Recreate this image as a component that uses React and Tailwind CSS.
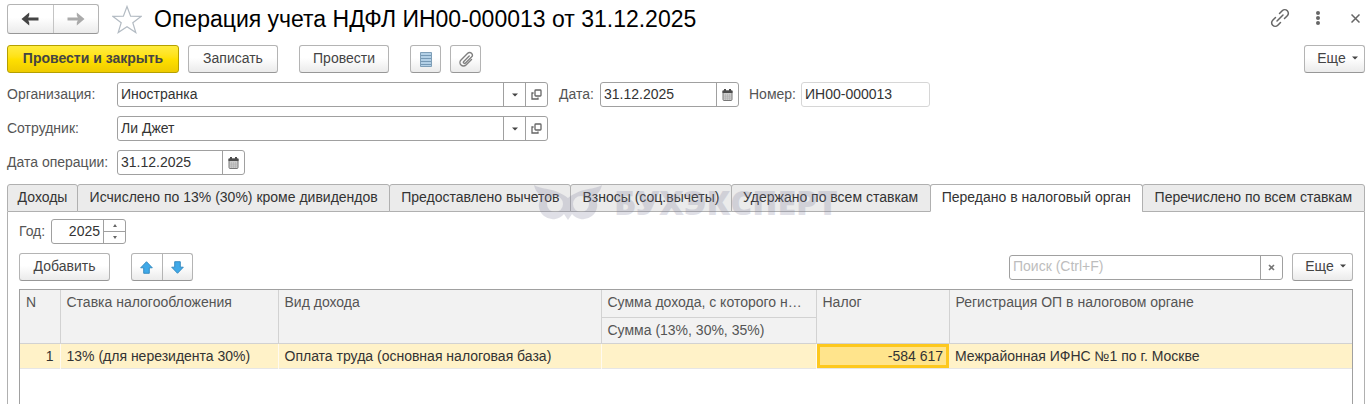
import { useState } from 'react';

const tabs = [
  'Доходы',
  'Исчислено по 13% (30%) кроме дивидендов',
  'Предоставлено вычетов',
  'Взносы (соц.вычеты)',
  'Удержано по всем ставкам',
  'Передано в налоговый орган',
  'Перечислено по всем ставкам',
];

const buttonClass =
  'flex h-7 shrink-0 items-center justify-center rounded-[3px] border border-[#b4b4b4] border-b-[#979797] bg-linear-to-b from-white from-45% to-[#ebebeb] text-[#444]';
const fieldClass = 'flex h-[25px] rounded-[3px] border border-[#a0a0a0] bg-white text-[#333]';
const inputClass = 'min-w-0 flex-1 bg-transparent px-[3px] pb-0.5 outline-none';
const sideClass = 'flex w-[22px] shrink-0 items-center justify-center border-l border-[#a0a0a0]';

const Caret = () => (
  <svg width="6" height="4" viewBox="0 0 6 4" fill="#444">
    <path d="M0 0.5h6L3 3.5z" />
  </svg>
);

const OpenIcon = () => (
  <svg width="11" height="11" viewBox="0 0 11 11" fill="none" stroke="#666" strokeWidth="1.3">
    <rect x="4" y="1" width="6" height="6" rx="0.8" />
    <path d="M2.6 4H1v6h6V8.4" />
  </svg>
);

const CalendarIcon = () => (
  <svg width="11" height="12" viewBox="0 0 11 12">
    <path d="M1 2h9v8.5a1 1 0 0 1-1 1H2a1 1 0 0 1-1-1z" fill="#ccc" stroke="#777" />
    <path d="M0.5 1.5h10V4h-10zM2 0h2v2H2zM7 0h2v2H7z" fill="#4c4c4c" />
    <path d="M3.5 5v6M5.5 5v6M7.5 5v6M1 7.2h9M1 9.2h9" stroke="#aaa" strokeWidth="0.5" />
  </svg>
);

const BackArrow = ({ className }) => (
  <svg className={className} width="18" height="14" viewBox="0 0 18 14" fill="currentColor">
    <path d="M0.5 7L8.2 0.6V3.4L7.2 5.5H17.5V8.5H7.2L8.2 10.6V13.4z" />
  </svg>
);

const BlueArrow = ({ className }) => (
  <svg className={className} width="13" height="13" viewBox="0 0 13 13">
    <path d="M6.5 0.7L12.3 6.8H9.3v5.5H3.7V6.8H0.7z" fill="#3fa9e8" stroke="#2e86bd" strokeWidth="0.9" strokeLinejoin="round" />
  </svg>
);

const SelectField = ({ id, value }) => (
  <div className={`${fieldClass} w-[431px]`}>
    <input id={id} defaultValue={value} className={inputClass} />
    <button aria-label="Выбрать" className={sideClass}><Caret /></button>
    <button aria-label="Открыть" className={sideClass}><OpenIcon /></button>
  </div>
);

const DateField = ({ id, className }) => (
  <div className={`${fieldClass} ${className}`}>
    <input id={id} defaultValue="31.12.2025" className={inputClass} />
    <button aria-label="Календарь" className={sideClass}><CalendarIcon /></button>
  </div>
);

const MoreButton = () => (
  <button className={`${buttonClass} w-[61px] gap-1.5 pb-0.5 pl-1.5`}>
    Еще <Caret />
  </button>
);

const Watermark = () => (
  <div className="pointer-events-none absolute top-0 left-[527px] flex items-center gap-3 text-[#8484a0] opacity-25">
    <svg width="68" height="35" viewBox="0 0 68 35">
      <path
        fill="currentColor"
        fillRule="evenodd"
        d="M0 0C7 5 20 2 34 13C48 2 61 5 68 0C67 5 64 9 60 11A13 13 0 0 1 38 29L34 35L30 29A13 13 0 0 1 8 11C4 9 1 5 0 0ZM21 11a8 8 0 1 0 0 16a8 8 0 1 0 0-16ZM47 11a8 8 0 1 0 0 16a8 8 0 1 0 0-16Z"
      />
    </svg>
    <span className="font-['Open_Sans',sans-serif] text-[34px] leading-9 font-extrabold">БУХЭКСПЕРТ</span>
  </div>
);

const App = () => {
  const [activeTab, setActiveTab] = useState(5);

  return (
    <div className="flex min-h-screen flex-col bg-white pt-1 pr-[3px] pl-[7px] font-['Liberation_Sans',Arial,sans-serif] text-[14px] leading-5 text-[#555]">
      {/* Title */}
      <header className="flex h-[30px] items-center">
        <div className="flex h-[30px] w-[92px] shrink-0 rounded-[3px] border border-[#b4b4b4] border-b-[#979797] bg-linear-to-b from-white from-45% to-[#ebebeb]">
          <button aria-label="Назад" className="flex flex-1 items-center justify-center border-r border-[#c4c4c4] text-[#444]">
            <BackArrow />
          </button>
          <button aria-label="Вперед" className="flex flex-1 items-center justify-center text-[#aaa]">
            <BackArrow className="rotate-180" />
          </button>
        </div>
        <button aria-label="В избранное" className="ml-[13px]">
          <svg width="30" height="29" viewBox="0 0 30 29" fill="none" stroke="#b3bbc3" strokeWidth="1.2">
            <path d="M15 1.5l3.6 9.6 10.4.3-8.2 6.3 3 9.8L15 21.8l-8.8 5.7 3-9.8L1 11.4l10.4-.3z" />
          </svg>
        </button>
        <h1 className="ml-3 text-[23px] leading-[30px] whitespace-nowrap text-black">
          Операция учета НДФЛ ИН00-000013 от 31.12.2025
        </h1>
        <div className="mr-[5px] mb-0.5 ml-auto flex items-center text-[#666]">
          <button aria-label="Ссылка">
            <svg width="20" height="20" viewBox="0 0 20 20" fill="none" stroke="currentColor" strokeWidth="1.5" strokeLinecap="round">
              <path d="M7 13l6-6" />
              <path d="M9.5 5.5l2.7-2.8a3.6 3.6 0 0 1 5.1 5.1l-2.8 2.7" />
              <path d="M10.5 14.5l-2.7 2.8a3.6 3.6 0 0 1-5.1-5.1l2.8-2.7" />
            </svg>
          </button>
          <button aria-label="Меню" className="ml-[25px]">
            <svg width="6" height="16" viewBox="0 0 6 16" fill="currentColor">
              <circle cx="3" cy="3" r="2" />
              <circle cx="3" cy="8" r="2" />
              <circle cx="3" cy="13" r="2" />
            </svg>
          </button>
          <button aria-label="Закрыть" className="ml-[30px]">
            <svg width="9" height="9" viewBox="0 0 9 9" stroke="currentColor" strokeWidth="1.5">
              <path d="M0.5 0.5l8 8M8.5 0.5l-8 8" />
            </svg>
          </button>
        </div>
      </header>

      {/* Commands */}
      <div className="mt-[11px] flex">
        <button className="h-7 w-[172px] rounded-[3px] border border-[#b5a000] bg-linear-to-b from-[#ffec3d] via-[#ffe000] to-[#efcb00] pb-0.5 font-bold text-[#444]">
          Провести и закрыть
        </button>
        <button className={`${buttonClass} ml-[9px] w-[90px] pb-0.5`}>Записать</button>
        <button className={`${buttonClass} ml-[21px] w-[90px] pb-0.5`}>Провести</button>
        <button aria-label="Список" className={`${buttonClass} ml-[21px] w-[31px]`}>
          <svg width="12" height="15" viewBox="0 0 12 15">
            <path d="M0.5 0.5h11v14H0.5z" fill="#b3d0e6" stroke="#7f9fb8" />
            <path d="M1 3.5h10M1 6.5h10M1 9.5h10M1 12.5h10" stroke="#7699b5" />
          </svg>
        </button>
        <button aria-label="Файлы" className={`${buttonClass} ml-[9px] w-[31px]`}>
          <svg width="16" height="16" viewBox="0 0 16 16" fill="none" stroke="#808080" strokeWidth="1.4" strokeLinecap="round">
            <path d="M11.2 5L5.8 10.4a1.2 1.2 0 0 0 1.7 1.7l6-6a2.6 2.6 0 0 0-3.8-3.8L3 9a3.5 3.5 0 0 0 5 5l5.5-5.5" />
          </svg>
        </button>
        <div className="ml-auto"><MoreButton /></div>
      </div>

      {/* Document fields */}
      <div className="mt-[9px] grid grid-cols-[110px_1fr] items-center gap-y-[9px] [&_label]:pb-0.5">
        <label htmlFor="organization">Организация:</label>
        <div className="flex items-center">
          <SelectField id="organization" value="Иностранка" />
          <label htmlFor="date" className="ml-[11px] w-[41px]">Дата:</label>
          <DateField id="date" className="w-[139px]" />
          <label htmlFor="number" className="ml-[10px] w-[52px]">Номер:</label>
          <input
            id="number"
            readOnly
            value="ИН00-000013"
            className="h-[25px] w-[129px] rounded-[3px] border border-[#d6d6d6] px-[3px] pb-0.5 text-[#333] outline-none"
          />
        </div>
        <label htmlFor="employee">Сотрудник:</label>
        <SelectField id="employee" value="Ли Джет" />
        <label htmlFor="operation-date" className="whitespace-nowrap">Дата операции:</label>
        <DateField id="operation-date" className="w-[128px]" />
      </div>

      {/* Tabs */}
      <div className="relative mt-[9px]">
        <div role="tablist" className="grid grid-cols-[70fr_312fr_181fr_160fr_199fr_212fr_223fr]">
          {tabs.map((tab, index) => (
            <button
              key={tab}
              role="tab"
              aria-selected={activeTab === index}
              onClick={() => setActiveTab(index)}
              className={`-mr-px h-7 rounded-t-[3px] border border-[#b0b0b0] pb-0.5 whitespace-nowrap text-[#333] last:mr-0 ${activeTab === index ? 'border-b-white bg-white' : 'bg-[#ebebeb]'}`}
            >
              {tab}
            </button>
          ))}
        </div>
        <Watermark />
      </div>

      <main className="flex flex-1 flex-col border-x border-[#b0b0b0] px-[11px] pt-[7px]">
        <div className="flex items-center">
          <label htmlFor="year" className="w-8 pb-0.5">Год:</label>
          <div className={`${fieldClass} w-[75px]`}>
            <input id="year" defaultValue="2025" className={`${inputClass} text-right`} />
            <div className="flex w-[22px] flex-col border-l border-[#a0a0a0]">
              <button aria-label="Больше" className="flex flex-1 items-center justify-center border-b border-[#a0a0a0]">
                <svg width="4" height="3" viewBox="0 0 4 3" fill="#666"><path d="M0 3h4L2 0z" /></svg>
              </button>
              <button aria-label="Меньше" className="flex flex-1 items-center justify-center">
                <svg width="4" height="3" viewBox="0 0 4 3" fill="#666"><path d="M0 0h4L2 3z" /></svg>
              </button>
            </div>
          </div>
        </div>

        <div className="mt-[9px] flex items-center">
          <button className={`${buttonClass} w-[91px] pb-0.5`}>Добавить</button>
          <div className={`${buttonClass} ml-[21px] w-[62px]`}>
            <button aria-label="Вверх" className="flex h-full flex-1 items-center justify-center border-r border-[#b4b4b4]">
              <BlueArrow />
            </button>
            <button aria-label="Вниз" className="flex h-full flex-1 items-center justify-center">
              <BlueArrow className="rotate-180" />
            </button>
          </div>
          <div className={`${fieldClass} mr-[9px] ml-auto w-[274px]`}>
            <input
              aria-label="Поиск"
              placeholder="Поиск (Ctrl+F)"
              className={`${inputClass} placeholder:text-[#bdbdbd]`}
            />
            <button aria-label="Очистить" className={sideClass}>
              <svg width="7" height="7" viewBox="0 0 7 7" stroke="#777" strokeWidth="1.6"><path d="M1 1l5 5M6 1L1 6" /></svg>
            </button>
          </div>
          <MoreButton />
        </div>

        <div className="mt-2 flex-1 border border-b-0 border-[#a0a0a0]">
          <table className="w-full table-fixed border-collapse text-left">
            <colgroup>
              <col className="w-10" />
              <col className="w-[218px]" />
              <col className="w-[323px]" />
              <col className="w-[215px]" />
              <col className="w-[133px]" />
              <col />
            </colgroup>
            <thead className="bg-[#f2f2f2] align-top text-[#555] [&_th]:border-[#d2d2d2] [&_th]:px-1.5 [&_th]:pt-0.5 [&_th]:font-normal">
              <tr className="h-[27px]">
                <th rowSpan={2} className="border-r border-b">N</th>
                <th rowSpan={2} className="border-r border-b">Ставка налогообложения</th>
                <th rowSpan={2} className="border-r border-b">Вид дохода</th>
                <th className="border-r border-b whitespace-nowrap">Сумма дохода, с которого н…</th>
                <th rowSpan={2} className="border-r border-b">Налог</th>
                <th rowSpan={2} className="border-b">Регистрация ОП в налоговом органе</th>
              </tr>
              <tr className="h-[26px]">
                <th className="border-r border-b">Сумма (13%, 30%, 35%)</th>
              </tr>
            </thead>
            <tbody>
              <tr className="h-[25px] border-b border-[#e6e6e6] bg-[#fff2c8] text-[#333] [&_td]:px-1.5">
                <td className="border-r border-[#fffaf0] text-right">1</td>
                <td className="border-r border-[#fffaf0]">13% (для нерезидента 30%)</td>
                <td className="border-r border-[#fffaf0]">Оплата труда (основная налоговая база)</td>
                <td className="border-r border-[#fffaf0]"></td>
                <td className="bg-[#ffe48c] text-right inset-ring-3 inset-ring-[#fdc81e]">-584 617</td>
                <td>Межрайонная ИФНС №1 по г. Москве</td>
              </tr>
            </tbody>
          </table>
        </div>
      </main>
    </div>
  );
};

export default App;
